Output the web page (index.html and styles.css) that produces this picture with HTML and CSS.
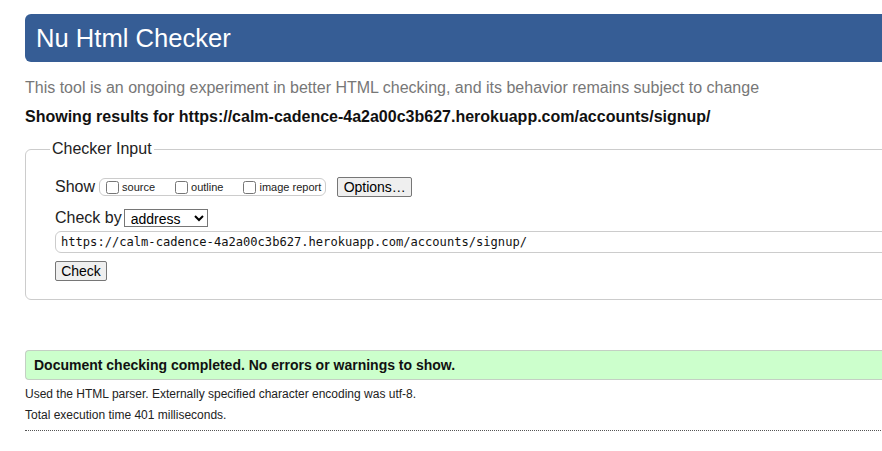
FILE: index.html
```html
<!DOCTYPE html>
<html lang="en">
<head>
<meta charset="utf-8">
<title>Nu Html Checker</title>
<link rel="stylesheet" href="styles.css">
</head>
<body>
<div class="page">
  <h1 class="title">Nu Html Checker</h1>
  <p class="tagline">This tool is an ongoing experiment in better HTML checking, and its behavior remains subject to change</p>
  <p class="results-for">Showing results for https://calm-cadence-4a2a00c3b627.herokuapp.com/accounts/signup/</p>
  <fieldset class="checker">
    <legend class="checker-legend">Checker Input</legend>
    <div class="show-row">
      <span class="row-label">Show</span>
      <div class="show-group">
        <label class="opt"><input type="checkbox" class="cb"><span>source</span></label>
        <label class="opt"><input type="checkbox" class="cb"><span>outline</span></label>
        <label class="opt"><input type="checkbox" class="cb"><span>image report</span></label>
      </div>
      <button class="btn btn-options" type="button">Options…</button>
    </div>
    <div class="checkby-row">
      <span class="row-label">Check by</span>
      <select class="sel"><option>address</option></select>
    </div>
    <input class="url" type="text" value="https://calm-cadence-4a2a00c3b627.herokuapp.com/accounts/signup/">
    <button class="btn btn-check" type="button">Check</button>
  </fieldset>
  <p class="success">Document checking completed. No errors or warnings to show.</p>
  <p class="meta">Used the HTML parser. Externally specified character encoding was utf-8.</p>
  <p class="meta">Total execution time 401 milliseconds.</p>
  <hr class="rule">
</div>
</body>
</html>
```
FILE: styles.css
```css
html, body {
  margin: 0;
  padding: 0;
  overflow: hidden;
  background: #fff;
}
body {
  font-family: Arial, "Liberation Sans", Helvetica, sans-serif;
  color: #000;
}
.page {
  padding: 14px 0 0 25px;
  width: 900px;
}
.title {
  margin: 0;
  height: 48px;
  line-height: 48px;
  padding-left: 11px;
  background: #365d95;
  color: #fff;
  font-weight: normal;
  font-size: 25.6px;
  border-radius: 6px;
}
.tagline {
  margin: 17px 0 0;
  font-size: 16px;
  line-height: 18px;
  color: #777;
}
.results-for {
  margin: 11px 0 0;
  font-size: 16px;
  line-height: 18px;
  font-weight: bold;
  color: #111;
}
.checker {
  margin: 14px 0 0;
  padding: 19px 0 18px 29px;
  border: 1px solid #ccc;
  border-radius: 6px;
  min-width: 0;
}
.checker-legend {
  margin-left: -5px;
  padding: 0 2px;
  font-size: 16px;
  line-height: 18px;
  color: #222;
}
.show-row {
  display: flex;
  align-items: center;
  height: 20px;
}
.row-label {
  font-size: 16px;
  line-height: 18px;
  color: #222;
}
.show-group {
  display: flex;
  align-items: center;
  gap: 20px;
  margin-left: 4px;
  height: 16px;
  padding: 0 4px 0 6px;
  border: 1px solid #ccc;
  border-radius: 6px;
  white-space: nowrap;
  flex: none;
}
.opt {
  display: flex;
  align-items: center;
  gap: 3px;
  font-size: 11px;
  color: #222;
  white-space: nowrap;
}
.cb {
  margin: 0;
  width: 13px;
  height: 13px;
}
.btn {
  font-family: Arial, "Liberation Sans", sans-serif;
  font-size: 14px;
  color: #000;
  background: #efefef;
  border: 1px solid #767676;
  border-radius: 2px;
  padding: 0;
  height: 20px;
}
.btn-options {
  margin-left: 11px;
  width: 75px;
  flex: none;
}
.checkby-row {
  display: flex;
  align-items: center;
  margin-top: 11px;
  height: 19px;
}
.sel {
  margin-left: 2px;
  width: 84px;
  height: 18px;
  font-family: Arial, "Liberation Sans", sans-serif;
  font-size: 14px;
  border: 1px solid #767676;
  border-radius: 0;
  background: #fff;
  padding: 0 0 0 2px;
}
.url {
  display: block;
  box-sizing: border-box;
  margin-top: 4px;
  width: 860px;
  height: 22px;
  padding: 0 5px;
  border: 1px solid #ccc;
  border-radius: 6px;
  font-family: "DejaVu Sans Mono", "Liberation Mono", monospace;
  font-size: 12.1px;
  color: #111;
}
.btn-check {
  display: block;
  margin-top: 8px;
  width: 52px;
}
.success {
  margin: 50px 0 0;
  box-sizing: border-box;
  height: 30px;
  line-height: 28px;
  padding-left: 8px;
  background: #ccffcc;
  border: 1px solid #c4cfc4;
  border-right: 0;
  border-radius: 4px 0 0 4px;
  font-size: 14px;
  font-weight: bold;
  color: #111;
}
.meta {
  margin: 7px 0 0;
  font-size: 12px;
  line-height: 14px;
  color: #222;
}
.rule {
  margin: 8px 0 0;
  border: 0;
  border-top: 1px dotted #555;
  height: 0;
}
```
